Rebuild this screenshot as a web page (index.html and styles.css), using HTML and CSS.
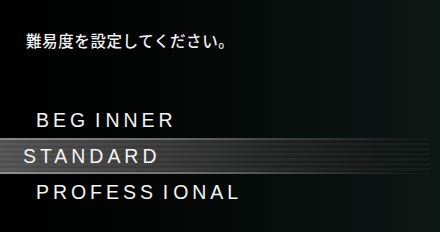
FILE: index.html
```html
<!DOCTYPE html>
<html lang="ja">
<head>
<meta charset="utf-8">
<link rel="stylesheet" href="styles.css">
</head>
<body>
<div class="screen">
  <p class="prompt">難易度を設定してください。</p>
  <ul class="menu">
    <li class="item">BEG<span class="i">I</span>NNER</li>
    <li class="item selected">STANDARD</li>
    <li class="item">PROFESS<span class="i">I</span>ONAL</li>
  </ul>
</div>
</body>
</html>
```
FILE: styles.css
```css
html, body {
  margin: 0;
  padding: 0;
  background: #000;
}
.screen {
  width: 440px;
  height: 232px;
  overflow: hidden;
  background:
    linear-gradient(to right, #000 0%, #030504 35%, #08100e 70%, #0d1714 100%);
}
.prompt {
  margin: 0;
  padding: 30px 0 0 26px;
  font-family: "Noto Sans CJK JP", sans-serif;
  font-size: 15.5px;
  font-weight: 500;
  line-height: 20px;
  letter-spacing: 0.6px;
  color: #f2f2f2;
}
.menu {
  list-style: none;
  margin: 52px 0 0 0;
  padding: 0;
}
.item {
  height: 36px;
  line-height: 36px;
  padding-left: 36px;
  font-family: "Liberation Sans", Arial, sans-serif;
  font-size: 19.5px;
  letter-spacing: 3.95px;
  color: #f4f4f4;
}
.i {
  margin-left: 6px;
  margin-right: 1px;
}
.selected {
  padding-left: 23px;
  margin-right: 10px;
  background:
    linear-gradient(to right, rgba(140,140,140,0.9) 0%, rgba(120,120,120,0.75) 40%, rgba(80,84,82,0.4) 70%, rgba(40,44,42,0) 92%) top / 100% 2px no-repeat,
    linear-gradient(to right, rgba(150,150,150,0.9) 0%, rgba(130,130,130,0.75) 45%, rgba(80,84,82,0.4) 75%, rgba(40,44,42,0) 95%) bottom / 100% 2px no-repeat,
    repeating-linear-gradient(to bottom, rgba(255,255,255,0.035) 0px, rgba(255,255,255,0.035) 2px, rgba(0,0,0,0.05) 3px, rgba(0,0,0,0.05) 5px),
    linear-gradient(to right, #555 0%, #484848 15%, #383838 40%, #242625 62%, #171a19 82%, rgba(20,24,22,0) 100%);
}
```
